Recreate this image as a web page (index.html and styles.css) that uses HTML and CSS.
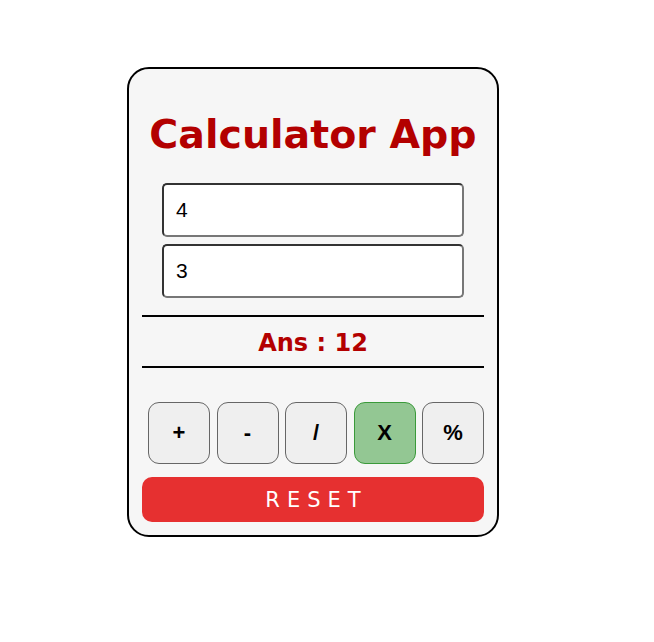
FILE: index.html
```html
<!DOCTYPE html>
<html>
<head>
<meta charset="utf-8">
<link rel="stylesheet" href="styles.css">
</head>
<body>
<div class="card">
  <h1 class="title">Calculator App</h1>
  <div class="inputs">
    <input class="num" type="text" value="4">
    <input class="num" type="text" value="3">
  </div>
  <hr class="rule rule-top">
  <div class="ans">Ans : 12</div>
  <hr class="rule rule-bottom">
  <div class="ops">
    <button class="op">+</button>
    <button class="op">-</button>
    <button class="op">/</button>
    <button class="op active">X</button>
    <button class="op">%</button>
  </div>
  <button class="reset">RESET</button>
</div>
</body>
</html>
```
FILE: styles.css
```css
html, body {
  margin: 0;
  padding: 0;
  background: #ffffff;
}
body {
  padding: 67px 0 0 127px;
  font-family: "DejaVu Sans", Verdana, sans-serif;
}
.card {
  box-sizing: border-box;
  width: 372px;
  height: 470px;
  border: 2px solid #000;
  border-radius: 22px;
  background: #f6f6f6;
  padding: 42px 13px 0 13px;
  display: flex;
  flex-direction: column;
  align-items: stretch;
}
.title {
  margin: 0;
  font-size: 39.5px;
  font-weight: bold;
  color: #b30000;
  text-align: center;
  line-height: 46px;
}
.inputs {
  display: flex;
  flex-direction: column;
  align-items: center;
  gap: 7px;
  margin-top: 26px;
}
.num {
  box-sizing: border-box;
  width: 302px;
  height: 54px;
  border: 2px solid;
  border-color: #333 #777 #777 #333;
  border-radius: 5px;
  background: #fff;
  padding: 0 12px;
  font-family: "Liberation Sans", Arial, sans-serif;
  font-size: 21px;
  color: #000;
  outline: none;
}
.rule {
  border: none;
  height: 2px;
  background: #000;
  margin: 0;
}
.rule-top {
  margin-top: 17px;
}
.ans {
  height: 49px;
  box-sizing: border-box;
  padding-top: 3px;
  display: flex;
  align-items: center;
  justify-content: center;
  font-weight: bold;
  font-size: 24px;
  color: #b30000;
}
.ops {
  display: flex;
  justify-content: space-between;
  padding: 0 0 0 6px;
  margin-top: 34px;
}
.op {
  box-sizing: border-box;
  width: 62px;
  height: 62px;
  border: 1px solid #666;
  border-radius: 11px;
  background: #efefef;
  font-family: "Liberation Sans", Arial, sans-serif;
  font-weight: bold;
  font-size: 22px;
  color: #000;
  padding: 0;
}
.op.active {
  background: #93c793;
  border-color: #3a9a3a;
}
.reset {
  margin-top: 13px;
  height: 45px;
  border: none;
  border-radius: 10px;
  background: #e63030;
  color: #fff;
  font-family: "DejaVu Sans", Verdana, sans-serif;
  font-size: 21px;
  letter-spacing: 7px;
  text-indent: 7px;
  padding: 0;
}
```
